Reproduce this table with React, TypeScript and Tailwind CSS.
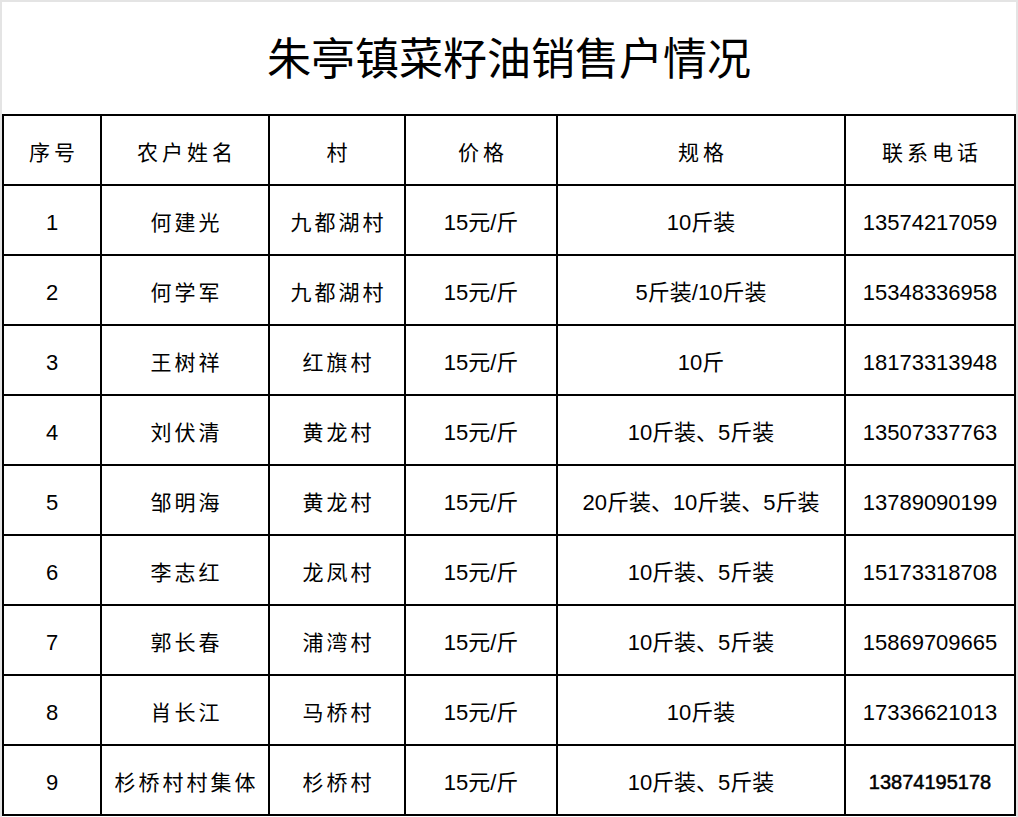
const COLS = ['w-[98px]', 'w-[168px]', 'w-[136px]', 'w-[152px]', 'w-[288px]', 'w-[170px]']

const HEAD = ['序号', '农户姓名', '村', '价格', '规格', '联系电话']

const ROWS = [
  ['1', '何建光', '九都湖村', '15元/斤', '10斤装', '13574217059'],
  ['2', '何学军', '九都湖村', '15元/斤', '5斤装/10斤装', '15348336958'],
  ['3', '王树祥', '红旗村', '15元/斤', '10斤', '18173313948'],
  ['4', '刘伏清', '黄龙村', '15元/斤', '10斤装、5斤装', '13507337763'],
  ['5', '邹明海', '黄龙村', '15元/斤', '20斤装、10斤装、5斤装', '13789090199'],
  ['6', '李志红', '龙凤村', '15元/斤', '10斤装、5斤装', '15173318708'],
  ['7', '郭长春', '浦湾村', '15元/斤', '10斤装、5斤装', '15869709665'],
  ['8', '肖长江', '马桥村', '15元/斤', '10斤装', '17336621013'],
  ['9', '杉桥村村集体', '杉桥村', '15元/斤', '10斤装、5斤装', '13874195178'],
]

const CJK = "font-['Liberation_Sans','Noto_Sans_CJK_SC',sans-serif]"

export default function App() {
  return (
    <div className={`w-[1018px] h-[817px] bg-white border-t-2 border-x-2 border-[#e4e4e4] text-black ${CJK}`}>
      <div className="h-[112px] flex items-center justify-center">
        <h1 className="text-[44px] font-['Noto_Sans_CJK_SC',sans-serif] leading-none pb-1">朱亭镇菜籽油销售户情况</h1>
      </div>

      <div className="border-l-2 border-t-2 border-black w-[1014px]">
        <div className="flex h-[70px]">
          {HEAD.map((h, i) => (
            <div key={h} className={`${COLS[i]} shrink-0 border-r-2 border-b-2 border-black flex items-center justify-center pt-1 text-[21px] tracking-[4px] pl-[4px] font-['Noto_Sans_CJK_SC',sans-serif]`}>
              {h}
            </div>
          ))}
        </div>
        {ROWS.map(r => (
          <div key={r[0]} className="flex h-[70px]">
            {r.map((c, i) => (
              <div key={i}
                className={`${COLS[i]} shrink-0 border-r-2 border-b-2 border-black flex items-center justify-center pt-1
                  ${i === 1 || i === 2 ? "text-[21px] tracking-[3px] pl-[3px] font-['Noto_Sans_CJK_SC',sans-serif]" : ''}
                  ${i === 5 && r[0] === '9' ? 'text-[20px] [-webkit-text-stroke:0.5px_black]' : ''}
                  ${i !== 1 && i !== 2 && !(i === 5 && r[0] === '9') ? 'text-[22px]' : ''}`}>
                {c}
              </div>
            ))}
          </div>
        ))}
      </div>
    </div>
  )
}
